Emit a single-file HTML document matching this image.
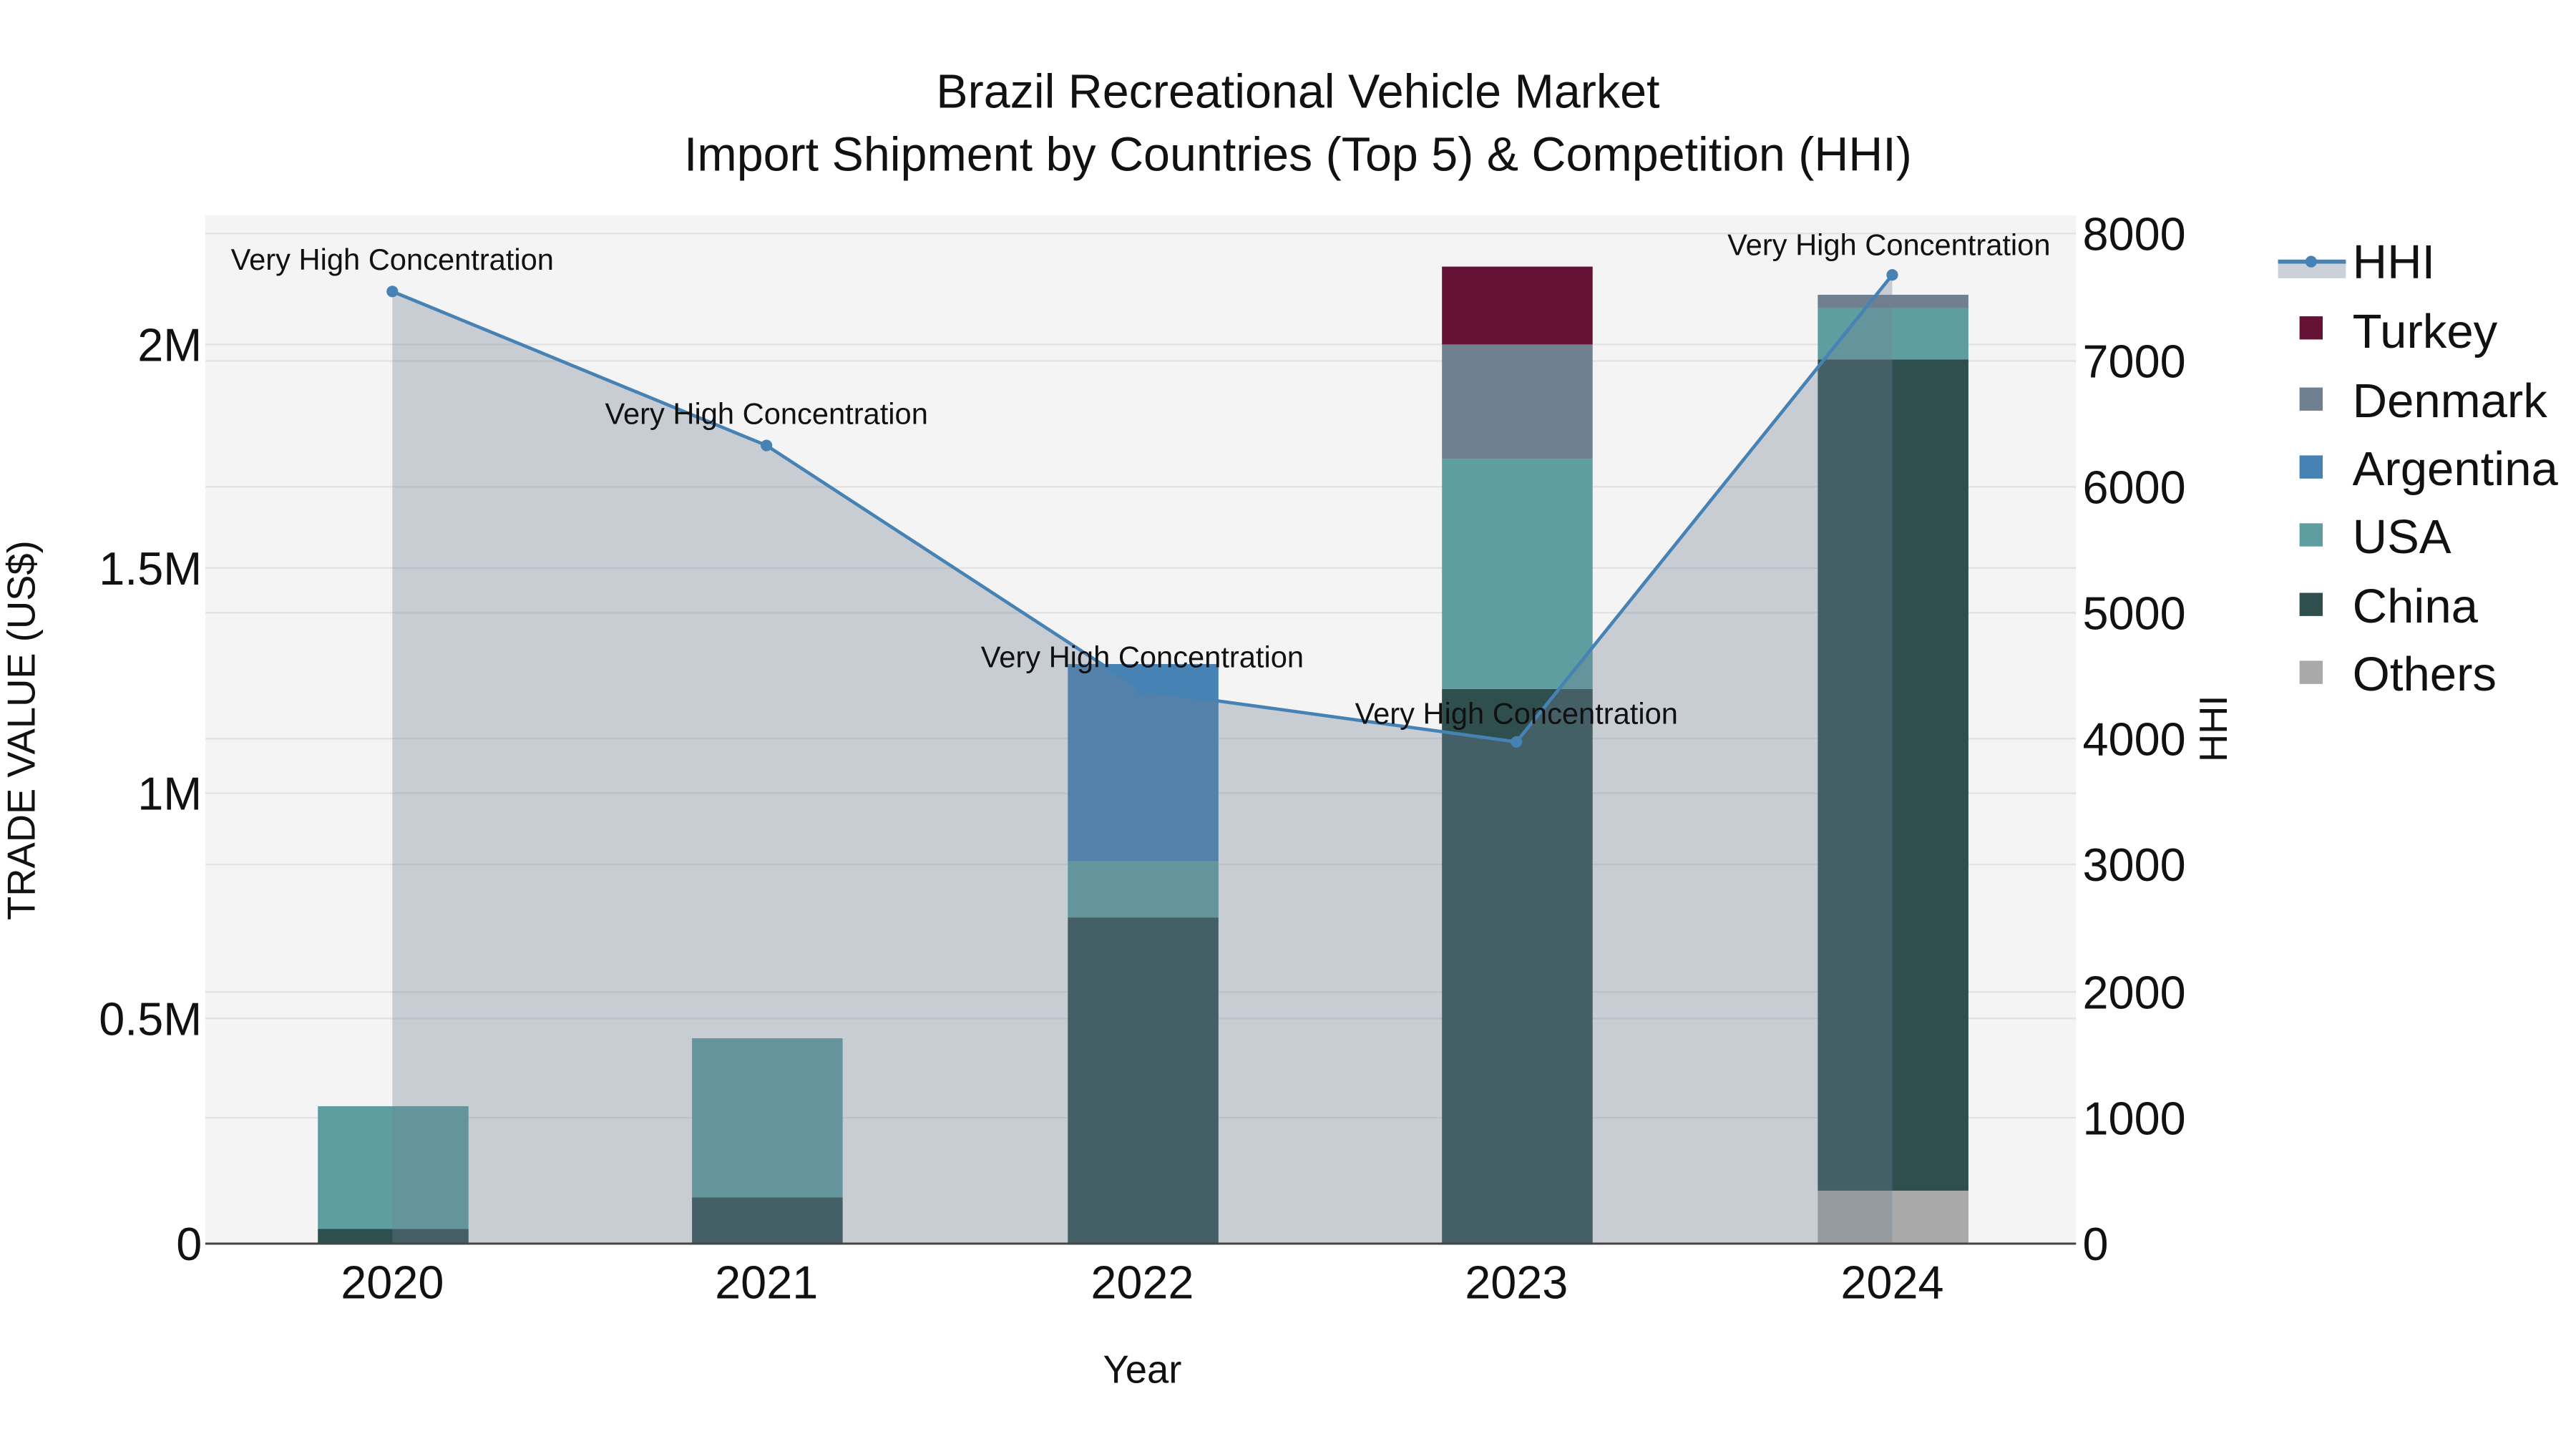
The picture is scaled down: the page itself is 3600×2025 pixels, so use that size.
<!DOCTYPE html>
<html><head><meta charset="utf-8"><style>
html,body{margin:0;padding:0;background:#fff;}
svg{display:block;}
text{font-family:"Liberation Sans Narrow","Liberation Sans",sans-serif;fill:#111;}
</style></head><body>
<svg width="3600" height="2025" viewBox="0 0 1556 875" preserveAspectRatio="none" xmlns="http://www.w3.org/2000/svg">
<rect x="0" y="0" width="1556" height="875" fill="#fff"/>
<rect x="124" y="130" width="1130" height="621" fill="#f4f4f4"/>
<g stroke="#e2e2e2" stroke-width="1">
<line x1="124" x2="1254" y1="208" y2="208"/><line x1="124" x2="1254" y1="343" y2="343"/>
<line x1="124" x2="1254" y1="479" y2="479"/><line x1="124" x2="1254" y1="615" y2="615"/>
<line x1="124" x2="1254" y1="141" y2="141"/><line x1="124" x2="1254" y1="218" y2="218"/>
<line x1="124" x2="1254" y1="294" y2="294"/><line x1="124" x2="1254" y1="370" y2="370"/>
<line x1="124" x2="1254" y1="446" y2="446"/><line x1="124" x2="1254" y1="522" y2="522"/>
<line x1="124" x2="1254" y1="599" y2="599"/><line x1="124" x2="1254" y1="675" y2="675"/>
</g>
<g>
<rect x="192" y="742" width="91" height="9" fill="#2f4f4f"/>
<rect x="192" y="668" width="91" height="74" fill="#5f9ea0"/>
<rect x="418" y="723" width="91" height="28" fill="#2f4f4f"/>
<rect x="418" y="627" width="91" height="96" fill="#5f9ea0"/>
<rect x="645" y="554" width="91" height="197" fill="#2f4f4f"/>
<rect x="645" y="520" width="91" height="34" fill="#5f9ea0"/>
<rect x="645" y="401" width="91" height="119" fill="#4682b4"/>
<rect x="871" y="416" width="91" height="335" fill="#2f4f4f"/>
<rect x="871" y="277" width="91" height="139" fill="#5f9ea0"/>
<rect x="871" y="208" width="91" height="69" fill="#708090"/>
<rect x="871" y="161" width="91" height="47" fill="#661236"/>
<rect x="1098" y="719" width="91" height="32" fill="#a9a9a9"/>
<rect x="1098" y="217" width="91" height="502" fill="#2f4f4f"/>
<rect x="1098" y="186" width="91" height="31" fill="#5f9ea0"/>
<rect x="1098" y="178" width="91" height="8" fill="#708090"/>
</g>
<path d="M237,176 L463,269 L690,417 L916,448 L1143,166 L1143,751 L237,751 Z" fill="rgba(112,128,150,0.33)"/>
<line x1="124" x2="1254" y1="751" y2="751" stroke="#444" stroke-width="1.3"/>
<polyline points="237,176 463,269 690,417 916,448 1143,166" fill="none" stroke="#4682b4" stroke-width="2"/>
<g fill="#4682b4"><circle cx="237" cy="176" r="3.5"/><circle cx="463" cy="269" r="3.5"/><circle cx="690" cy="417" r="3.5"/><circle cx="916" cy="448" r="3.5"/><circle cx="1143" cy="166" r="3.5"/></g>
<g font-size="18" text-anchor="middle" style="font-family:'Liberation Sans',sans-serif">
<text x="237" y="163">Very High Concentration</text>
<text x="463" y="256">Very High Concentration</text>
<text x="690" y="403">Very High Concentration</text>
<text x="916" y="437">Very High Concentration</text>
<text x="1141" y="154">Very High Concentration</text>
</g>
<g text-anchor="middle" font-size="28.7" style="font-family:'Liberation Sans',sans-serif">
<text x="784" y="65" fill="#222">Brazil Recreational Vehicle Market</text>
<text x="784" y="103" fill="#222">Import Shipment by Countries (Top 5) &amp; Competition (HHI)</text>
</g>
<g font-size="28" text-anchor="end">
<text x="122" y="761">0</text><text x="122" y="625">0.5M</text><text x="122" y="489">1M</text>
<text x="122" y="353">1.5M</text><text x="122" y="218">2M</text>
</g>
<g font-size="28" text-anchor="start">
<text x="1258" y="761">0</text><text x="1258" y="685">1000</text><text x="1258" y="609">2000</text>
<text x="1258" y="532">3000</text><text x="1258" y="456">4000</text><text x="1258" y="380">5000</text>
<text x="1258" y="304">6000</text><text x="1258" y="228">7000</text><text x="1258" y="151">8000</text>
</g>
<g font-size="28" text-anchor="middle">
<text x="237" y="784">2020</text><text x="463" y="784">2021</text><text x="690" y="784">2022</text>
<text x="916" y="784">2023</text><text x="1143" y="784">2024</text>
</g>
<text x="690" y="835" font-size="23.5" text-anchor="middle" style="font-family:'Liberation Sans',sans-serif">Year</text>
<text transform="translate(21,441) rotate(-90)" font-size="23.5" text-anchor="middle" style="font-family:'Liberation Sans',sans-serif">TRADE VALUE (US$)</text>
<text transform="translate(1345,440) rotate(-90)" font-size="23.5" text-anchor="middle" style="font-family:'Liberation Sans',sans-serif">HHI</text>
<rect x="1376" y="158" width="41" height="10" fill="#ccd1d9"/>
<line x1="1376" x2="1417" y1="158" y2="158" stroke="#4682b4" stroke-width="2.5"/>
<circle cx="1396" cy="158" r="3.5" fill="#4682b4"/>
<rect x="1389" y="191" width="14" height="14" fill="#661236"/>
<rect x="1389" y="234" width="14" height="14" fill="#708090"/>
<rect x="1389" y="275" width="14" height="14" fill="#4682b4"/>
<rect x="1389" y="316" width="14" height="14" fill="#5f9ea0"/>
<rect x="1389" y="358" width="14" height="14" fill="#2f4f4f"/>
<rect x="1389" y="399" width="14" height="14" fill="#a9a9a9"/>
<g font-size="29">
<text x="1421" y="168">HHI</text><text x="1421" y="210">Turkey</text><text x="1421" y="252">Denmark</text>
<text x="1421" y="293">Argentina</text><text x="1421" y="334">USA</text><text x="1421" y="376">China</text>
<text x="1421" y="417">Others</text>
</g>
</svg>
</body></html>
